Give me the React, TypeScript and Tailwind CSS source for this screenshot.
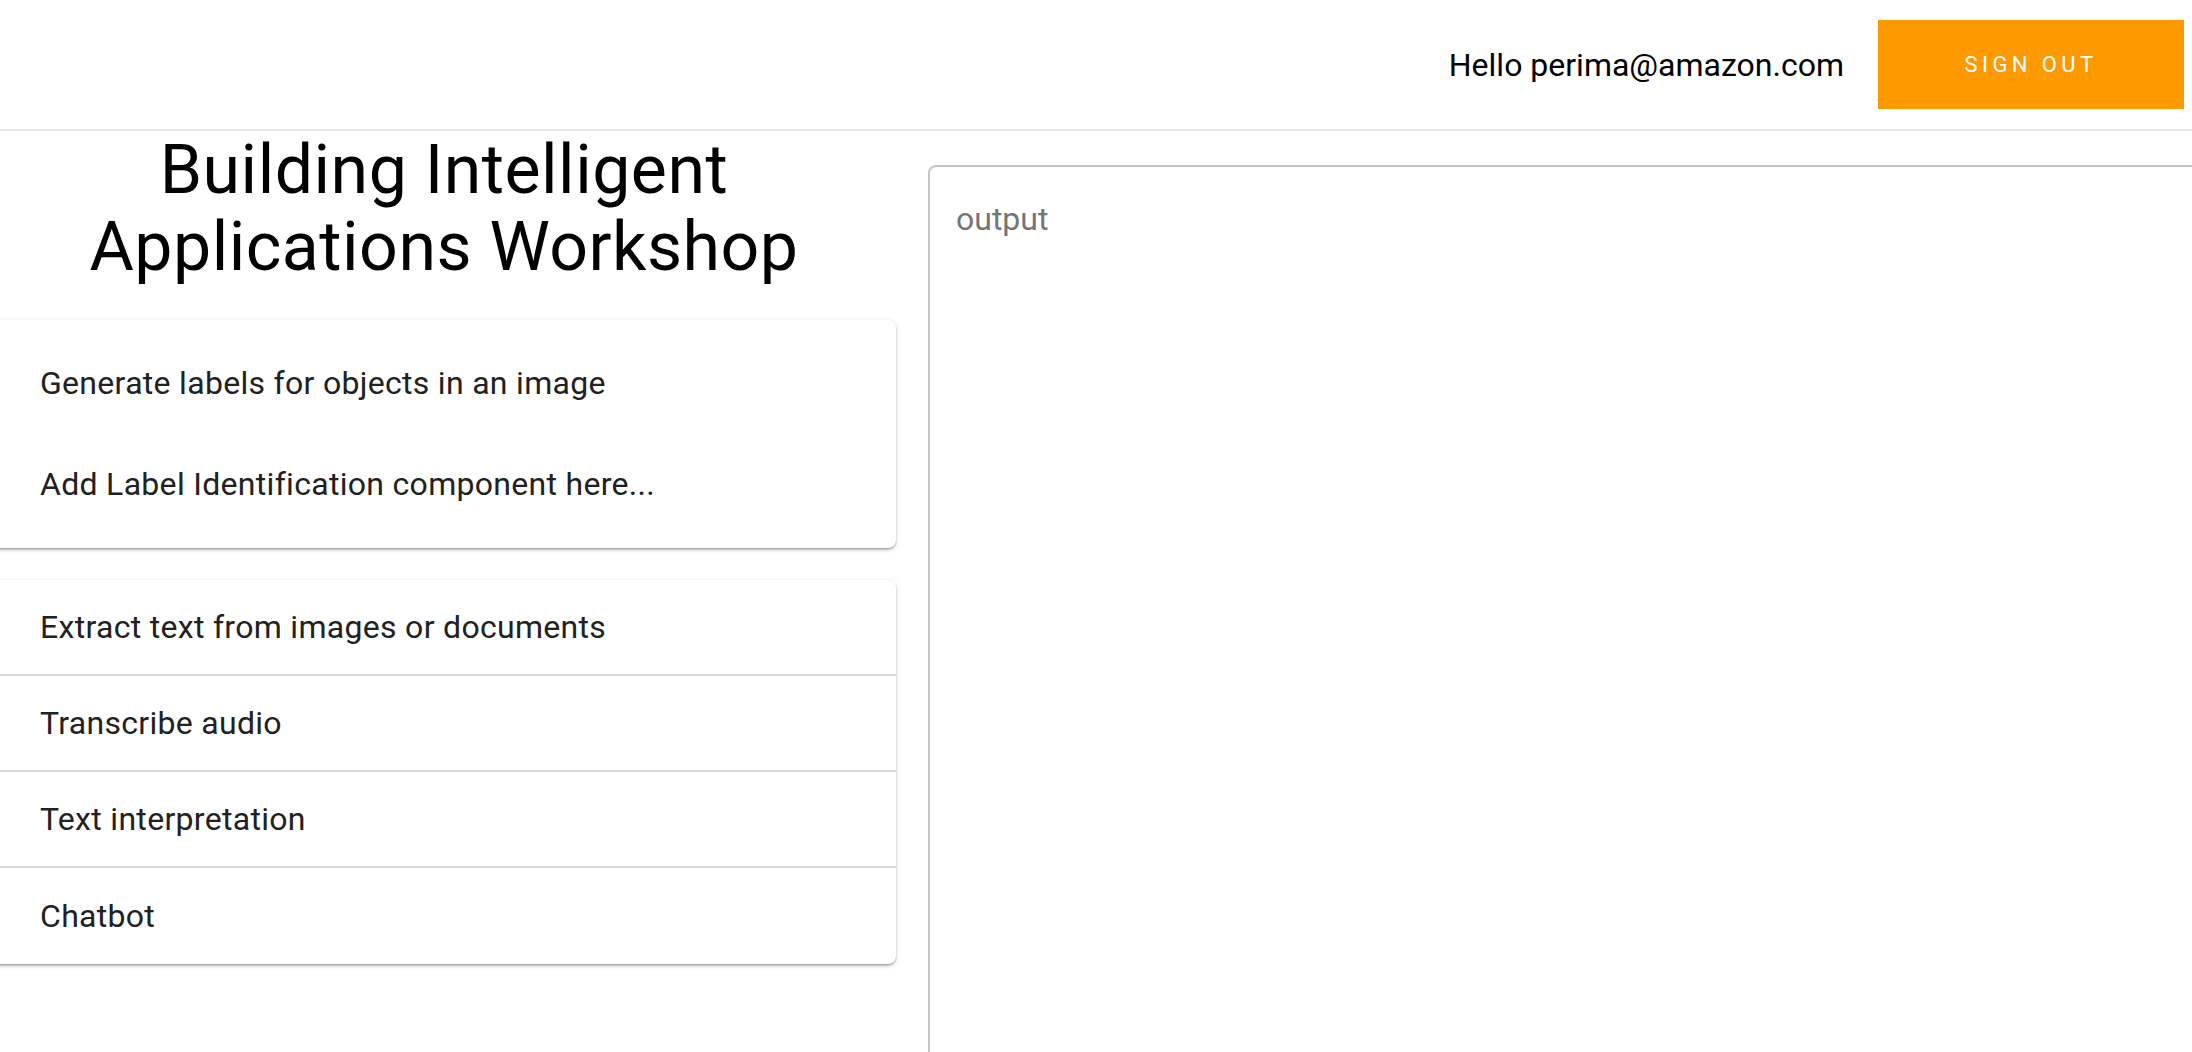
import React from "react";

const tasks = [
  "Extract text from images or documents",
  "Transcribe audio",
  "Text interpretation",
  "Chatbot",
];

const cardShadow =
  "shadow-[0_2px_2px_-1px_rgba(0,0,0,0.25),0_2px_3px_0_rgba(0,0,0,0.16),0_1px_6px_0_rgba(0,0,0,0.1)]";

const App: React.FC = () => {
  return (
    <div className="h-[1052px] w-full overflow-hidden bg-white font-['Roboto',sans-serif]">
      {/* top bar */}
      <header className="flex h-[131px] items-center justify-end gap-[34px] border-b-2 border-[#e6e6e6] pr-2">
        <span className="text-[32px] text-black">Hello perima@amazon.com</span>
        <button className="h-[89px] w-[306px] bg-[#ff9900] text-[22px] uppercase tracking-[0.2em] text-white">
          Sign Out
        </button>
      </header>

      <main className="flex">
        <section className="-ml-2 w-[904px] shrink-0">
          <h1 className="pt-px text-center text-[68px] leading-[77px] tracking-[0.0074em] text-black">
            Building Intelligent
            <br />
            Applications Workshop
          </h1>

          <div className={`mt-[34px] flex flex-col gap-[53px] rounded-lg bg-white pb-[40px] pl-12 pt-[39px] ${cardShadow}`}>
            <p className="text-[32px] leading-[48px] tracking-[0.0094em] text-[#212121]">Generate labels for objects in an image</p>
            <p className="text-[32px] leading-[48px] tracking-[0.0094em] text-[#212121]">Add Label Identification component here...</p>
          </div>

          <ul className={`mt-8 rounded-lg bg-white ${cardShadow}`}>
            {tasks.map((task, i) => (
              <li
                key={task}
                className={`flex h-[96px] items-center pl-12 text-[32px] tracking-[0.0094em] text-[#212121] ${
                  i < tasks.length - 1 ? "border-b-2 border-[#dadada]" : ""
                }`}
              >
                {task}
              </li>
            ))}
          </ul>
        </section>

        <section className="flex-1 pl-8 pt-[34px]">
          <div className="-mr-6 h-[1000px] rounded-lg border-2 border-[#c4c4c4] pl-[26px] pt-7">
            <span className="text-[32px] leading-[48px] text-[#757575]">output</span>
          </div>
        </section>
      </main>
    </div>
  );
};

export default App;
